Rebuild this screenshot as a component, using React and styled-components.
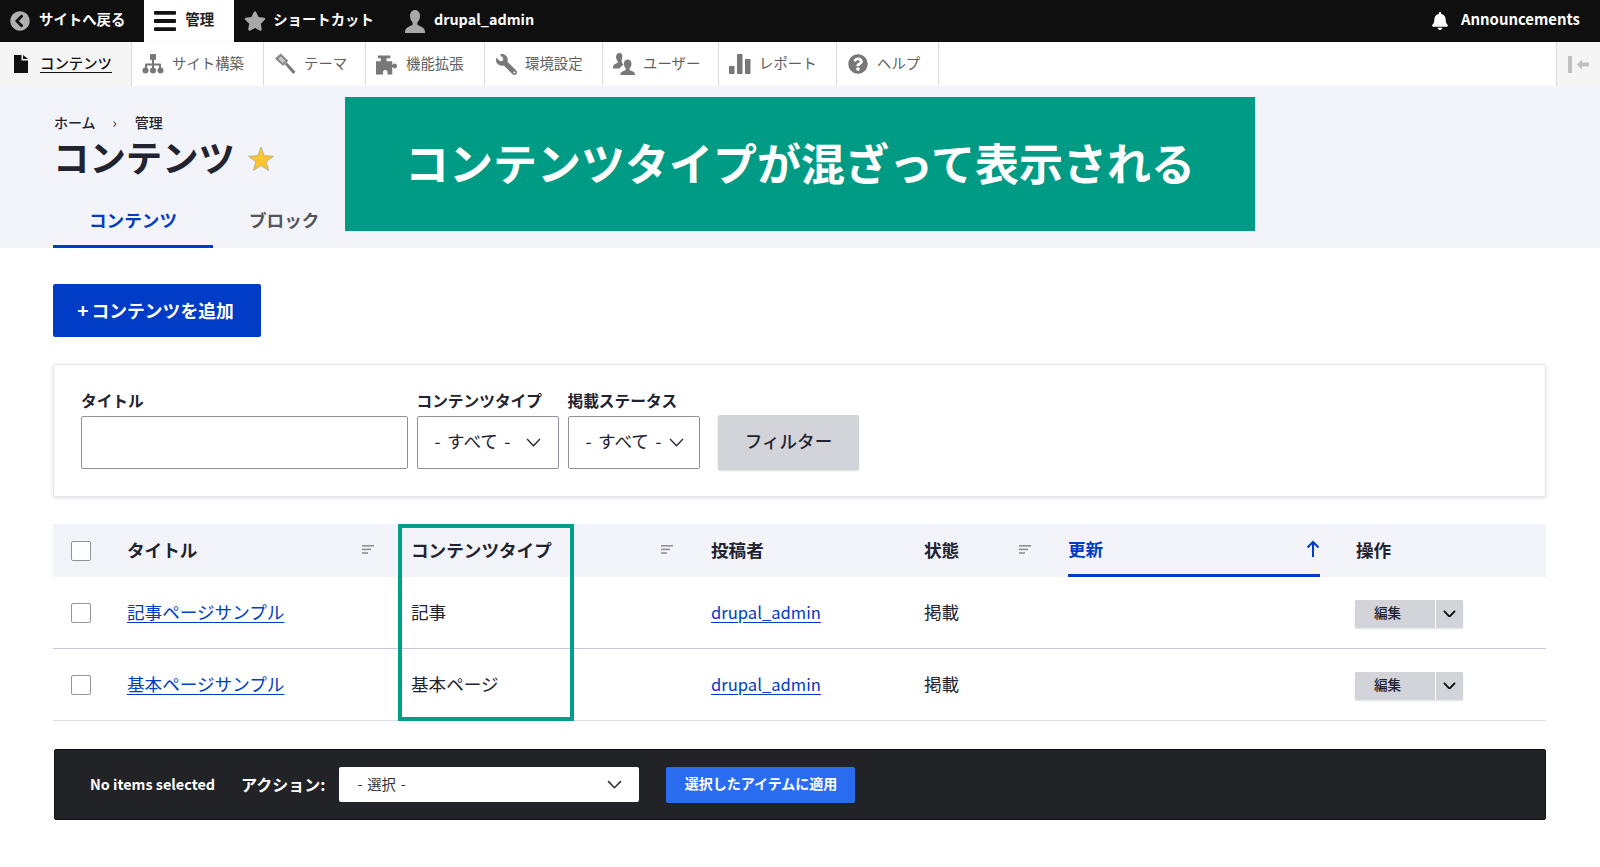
import React from 'react';
import styled, { createGlobalStyle } from 'styled-components';
import { FaChevronCircleLeft, FaStar, FaBell, FaWrench, FaQuestionCircle } from 'react-icons/fa';

const GlobalStyle = createGlobalStyle`
  html, body { margin: 0; padding: 0; background: #fff; }
  body {
    font-family: "Noto Sans CJK JP", "Noto Sans", sans-serif;
    color: #222330;
  }
  * { box-sizing: border-box; }
`;

const Page = styled.div`
  width: 1600px;
  height: 867px;
  overflow: hidden;
  background: #fff;
`;

const TopBar = styled.div`
  display: flex;
  align-items: stretch;
  height: 42px;
  background: #0f0f0f;
`;

const TopItem = styled.a`
  display: flex;
  align-items: center;
  gap: ${(p) => p.$gap || 9}px;
  padding: 0 ${(p) => p.$right || 19}px 0 10px;
  margin-left: ${(p) => (p.$push ? 'auto' : '0')};
  font-size: ${(p) => p.$size || 14.4}px;
  font-weight: 700;
  line-height: 1;
  color: ${(p) => (p.$active ? '#222' : '#fff')};
  background: ${(p) => (p.$active ? '#fff' : 'transparent')};
  svg { flex: none; }
`;

const TopLabel = styled.span`
  display: block;
  margin-top: -4px;
`;

const Toolbar = styled.div`
  position: relative;
  display: flex;
  align-items: stretch;
  height: 44px;
  background: #fff;
  box-shadow: 0 1px 1px rgba(0, 0, 0, 0.4), 0 2px 4px rgba(0, 0, 0, 0.25);
`;

const ToolItem = styled.a`
  display: flex;
  align-items: center;
  gap: 8px;
  width: ${(p) => p.$w}px;
  padding-left: 10px;
  border-right: 1px solid #dcdcdc;
  font-size: 14.4px;
  line-height: 1;
  color: ${(p) => (p.$active ? '#111' : '#5f5f5f')};
  background: ${(p) => (p.$active ? '#f5f5f5' : '#fff')};
  font-weight: ${(p) => (p.$active ? 500 : 400)};
  text-decoration: ${(p) => (p.$active ? 'underline' : 'none')};
  text-underline-offset: 3px;
`;

const ToolLabel = styled.span`
  display: block;
  margin-top: -2px;
`;

const ToolIcon = styled.span`
  display: flex;
  align-items: center;
  justify-content: center;
  width: 22px;
  height: 22px;
  flex: none;
  color: #787878;
`;

const Collapse = styled.div`
  display: flex;
  align-items: center;
  justify-content: center;
  width: 44px;
  margin-left: auto;
  background: #f5f5f5;
  border-left: 1px solid #dcdcdc;
`;

const Header = styled.header`
  position: relative;
  height: 162px;
  padding: 26px 0 0 54px;
  background: #f3f4f9;
`;

const Breadcrumb = styled.div`
  display: flex;
  align-items: center;
  height: 20px;
  font-size: 14px;
  font-weight: 500;
  color: #222330;
  span:nth-child(2) { margin: 0 18px 0 17px; font-weight: 400; }
`;

const TitleRow = styled.div`
  display: flex;
  align-items: center;
  gap: 13px;
  height: 44px;
  margin-top: 3px;
`;

const Title = styled.h1`
  margin: -3px 0 0 -1px;
  font-size: 36.4px;
  font-weight: 700;
  line-height: 44px;
  color: #222330;
`;

const StarSvg = styled.svg`
  margin-top: 2px;
`;

const Tabs = styled.div`
  display: flex;
  margin: 21px 0 0 -1px;
`;

const Tab = styled.a`
  display: flex;
  align-items: center;
  height: 48px;
  padding: 0 ${(p) => (p.$active ? 36 : 35)}px 6px;
  font-size: 17.6px;
  font-weight: 700;
  color: ${(p) => (p.$active ? '#003cc5' : '#55565b')};
  border-bottom: 3px solid ${(p) => (p.$active ? '#003cc5' : 'transparent')};
  margin-right: ${(p) => (p.$active ? '1px' : '0')};
`;

const Banner = styled.div`
  position: absolute;
  left: 345px;
  top: 11px;
  width: 910px;
  height: 134px;
  display: flex;
  align-items: center;
  justify-content: center;
  padding-bottom: 4px;
  background: #009b84;
  color: #fff;
  font-size: 44px;
  font-weight: 700;
`;

const Main = styled.main`
  padding: 36px 54px 0 53px;
`;

const AddButton = styled.a`
  display: flex;
  align-items: center;
  justify-content: center;
  gap: 3px;
  width: 208px;
  height: 53px;
  padding: 0 3px 2px 0;
  background: #003cc5;
  border-radius: 2px;
  color: #fff;
  font-size: 17.8px;
  font-weight: 700;
`;

const Plus = styled.span`
  font-size: 19px;
  line-height: 1;
`;

const FilterCard = styled.form`
  display: flex;
  align-items: flex-end;
  height: 133px;
  margin-top: 27px;
  padding: 24px 0 27px 27px;
  background: #fff;
  border: 1px solid #e6e7ee;
  border-radius: 2px;
  box-shadow: 0 1px 4px rgba(0, 0, 0, 0.12);
`;

const Field = styled.div`
  display: flex;
  flex-direction: column;
  width: ${(p) => p.$w}px;
  margin-right: ${(p) => p.$mr}px;
`;

const Label = styled.label`
  height: 27px;
  font-size: 15.7px;
  font-weight: 700;
  line-height: 24px;
  white-space: nowrap;
`;

const TextInput = styled.input`
  height: 53px;
  padding: 0 16px;
  background: #fff;
  border: 1px solid #8e929c;
  border-radius: 2px;
  outline: none;
`;

const Select = styled.div`
  display: flex;
  align-items: center;
  justify-content: space-between;
  height: 53px;
  padding: 0 ${(p) => p.$right}px 0 17px;
  background: #fff;
  border: 1px solid #8e929c;
  border-radius: 2px;
  font-size: 17.6px;
  word-spacing: 2.5px;
  white-space: pre;
  color: #222330;
`;

const SelectText = styled.span`
  display: block;
  margin-top: -4px;
`;

const FilterButton = styled.button`
  width: 141px;
  height: 55px;
  margin-bottom: -1px;
  padding: 0 0 5px;
  background: #d3d4d9;
  border: none;
  border-radius: 2px;
  box-shadow: 0 1px 2px rgba(0, 0, 0, 0.15);
  font-family: inherit;
  font-size: 17.6px;
  font-weight: 500;
  color: #222330;
`;

const TableWrap = styled.div`
  position: relative;
  margin-top: 27px;
`;

const columns = '62px 284px 300px 213px 144px 288px 1fr';

const HeadRow = styled.div`
  display: grid;
  grid-template-columns: ${columns};
  height: 53px;
  background: #f3f4f9;
`;

const HeadCell = styled.div`
  display: flex;
  align-items: center;
  justify-content: space-between;
  padding: 0 ${(p) => p.$right || 25}px 3px 12px;
  font-size: 17.6px;
  font-weight: 700;
  color: #222330;
`;

const ActiveHead = styled(HeadCell)`
  margin: 0 24px 0 12px;
  padding: 0 0 1px;
  color: #003cc5;
  border-bottom: 3px solid #003cc5;
`;

const CheckCell = styled.div`
  display: flex;
  align-items: center;
  justify-content: center;
  padding: 0 8px 0 2px;
`;

const Check = styled.input.attrs({ type: 'checkbox' })`
  appearance: none;
  width: 20px;
  height: 20px;
  margin: 0;
  background: #fff;
  border: 1px solid #91949e;
  border-radius: 2px;
`;

const Row = styled.div`
  display: grid;
  grid-template-columns: ${columns};
  height: 72px;
  border-bottom: 1px solid ${(p) => (p.$last ? '#dedfe6' : '#c5c8d6')};
`;

const Cell = styled.div`
  display: flex;
  align-items: center;
  padding: 0 0 2px 12px;
  font-size: 17.6px;
  color: #222330;
`;

const ControlCell = styled(Cell)`
  padding: 2px 0 0 12px;
`;

const TableLink = styled.a`
  color: #003cc5;
  font-size: ${(p) => p.$size || 17.6}px;
  text-decoration: underline;
  text-underline-offset: 3px;
`;

const Highlight = styled.div`
  position: absolute;
  left: 345px;
  top: 0;
  width: 176px;
  height: 197px;
  border: 4px solid #00a088;
  pointer-events: none;
`;

const DropButton = styled.div`
  display: flex;
  align-items: stretch;
  width: 108px;
  height: 28px;
  margin-left: -1px;
  background: #d3d4d9;
  border-radius: 2px;
  box-shadow: 0 1px 2px rgba(0, 0, 0, 0.12);
  font-size: 13.6px;
  font-weight: 500;
`;

const DropMain = styled.span`
  display: flex;
  align-items: center;
  width: 81px;
  padding: 0 0 3px 19px;
  border-right: 1px solid #fff;
`;

const DropToggle = styled.span`
  display: flex;
  align-items: center;
  justify-content: center;
  flex: 1;
`;

const ActionBar = styled.div`
  display: flex;
  align-items: center;
  height: 71px;
  margin: 28px 0 0 1px;
  padding-left: 35px;
  background: #222327;
  border: 1px solid #101012;
  border-radius: 2px;
  color: #fff;
`;

const Selected = styled.span`
  margin: 0 26px 2px 0;
  font-size: 14.4px;
  font-weight: 700;
`;

const ActionLabel = styled.span`
  margin: 0 14px 2px 0;
  font-size: 16px;
  font-weight: 700;
`;

const ActionSelect = styled.div`
  display: flex;
  align-items: center;
  justify-content: space-between;
  width: 300px;
  height: 35px;
  margin-right: 27px;
  padding: 0 17px 0 18px;
  background: #fff;
  border-radius: 2px;
  font-size: 14.4px;
  word-spacing: 1.5px;
  color: #333;
`;

const ActionText = styled.span`
  display: block;
  margin-top: -3px;
`;

const ApplyButton = styled.button`
  width: 189px;
  height: 36px;
  padding: 0 0 3px;
  background: #2a6cf0;
  border: none;
  border-radius: 2px;
  font-family: inherit;
  font-size: 14px;
  font-weight: 700;
  color: #fff;
`;

const Chevron = ({ w = 14, color = '#222330', sw = 1.5 }) => (
  <svg width={w} height={w * 0.6} viewBox="0 0 14 8.4" fill="none">
    <path d="M1 1l6 6.2L13 1" stroke={color} strokeWidth={sw} />
  </svg>
);

const SortIcon = () => (
  <svg width="12" height="9" viewBox="0 0 12 9" fill="#8e929c">
    <rect width="12" height="1.6" />
    <rect y="3.6" width="9" height="1.6" />
    <rect y="7.2" width="6" height="1.6" />
  </svg>
);

const UpArrow = () => (
  <svg width="14" height="17" viewBox="0 0 14 17" fill="none" stroke="#003cc5" strokeWidth="2">
    <path d="M7 17V2M1.5 7.5L7 2l5.5 5.5" />
  </svg>
);

const Hamburger = () => (
  <svg width="22" height="20" viewBox="0 0 22 20" fill="#111">
    <rect width="22" height="3.8" rx="1" />
    <rect y="8.100" width="22" height="3.8" rx="1" />
    <rect y="16.200" width="22" height="3.8" rx="1" />
  </svg>
);

const personPath =
  'M11 0C8 0 6 2.4 6 6c0 2.6 1.2 5 2.6 6.4v2.4C6 16.4 1 17.2 1 22v1h20v-1c0-4.8-5-5.6-7.6-7.2v-2.4C14.8 11 16 8.6 16 6c0-3.6-2-6-5-6z';

const Person = () => (
  <svg width="22" height="23" viewBox="0 0 22 23" fill="#a8a8a8">
    <path d={personPath} />
  </svg>
);

const FileIcon = () => (
  <svg width="14" height="18" viewBox="0 0 14 18" fill="#111">
    <path d="M0 0h7.5v5.5H14V18H0z" />
    <path d="M9 0l5 4H9z" />
  </svg>
);

const SiteIcon = () => (
  <svg width="22" height="20" viewBox="0 0 22 20" fill="#787878">
    <rect x="8" y="0" width="6" height="6" rx="1" />
    <rect x="10" y="5" width="2" height="11" />
    <path d="M3 14v-3.5a1 1 0 0 1 1-1h14a1 1 0 0 1 1 1V14h-2v-2.5H5V14z" />
    <circle cx="3.5" cy="16.5" r="3" />
    <circle cx="11" cy="16.5" r="3" />
    <circle cx="18.5" cy="16.5" r="3" />
  </svg>
);

const ThemeIcon = () => (
  <svg width="23" height="22" viewBox="0 0 23 22" fill="#787878">
    <path d="M7 0l8 7.5-5.5 5.5L1 5.2z" fill="#8a8a8a" />
    <path d="M7 3.2l4.8 4.5-2.4 2.4-4.8-4.6z" fill="#fff" opacity="0.55" />
    <path d="M11.5 11.5l2-2L22.5 19l-2.4 2.4z" />
  </svg>
);

const PuzzleIcon = () => (
  <svg width="23" height="22" viewBox="0 0 23 22" fill="#787878">
    <path d="M2 2h13v3h-4v3h6v4.2c.7-1.2 1.6-1.7 2.6-1.7 1.400 0 2.400 1.200 2.400 2.500s-1 2.500-2.400 2.500c-1 0-1.900-.6-2.600-1.700V22h-5v-2.500c0-1.200-1-2.200-2.300-2.200S7.400 18.300 7.400 19.500V22H0V8h5V5H2z" />
  </svg>
);

const UsersIcon = () => (
  <svg width="24" height="24" viewBox="0 0 24 24" fill="#787878">
    <path d="M7 0C4.800 0 3.300 1.900 3.300 4.400c0 1.800.8 3.500 1.800 4.500v1.700C3.200 11.700 0 12.400 0 15.500V17h7.500c.4-2 2-3 3.500-3.700v-1c-.9-1-1.600-2.500-1.800-4 .5-.9.800-2 .800-3.900C10.800 1.900 9.200 0 7 0z" />
    <path d="M16 7c-2.500 0-4.200 2-4.200 4.800 0 2 .9 3.800 2 4.900v1.900C11.700 19.800 8 20.500 8 23.300V24h16v-.7c0-2.800-3.700-3.500-5.800-4.700v-1.900c1.100-1.100 2-2.900 2-4.900C20.200 9 18.500 7 16 7z" />
  </svg>
);

const BarsIcon = () => (
  <svg width="22" height="20" viewBox="0 0 22 20" fill="#787878">
    <rect x="0" y="12" width="5.500" height="8" />
    <rect x="8" y="0" width="5.500" height="20" />
    <rect x="16" y="5" width="5.500" height="15" />
  </svg>
);

const CollapseIcon = () => (
  <svg width="21" height="17" viewBox="0 0 21 17" fill="#bfbfbf">
    <rect width="4" height="17" />
    <path d="M9 8.500L14 3.500V6.500H21V10.500H14V13.500z" />
  </svg>
);

const FavStar = () => (
  <StarSvg width="26" height="25" viewBox="0 0 26 25">
    <path d="M13 1l3.200 8.700 9.300.6-7.300 5.500 2.500 8.700L13 19.600l-7.700 4.900 2.500-8.700L.5 10.300l9.300-.6z" fill="#fcc42d" stroke="#a8a28a" strokeWidth="0.7" />
  </StarSvg>
);

const rows = [
  { title: '記事ページサンプル', type: '記事' },
  { title: '基本ページサンプル', type: '基本ページ' },
];

export default function App() {
  return (
    <Page>
      <GlobalStyle />
      <TopBar>
        <TopItem $gap={9} $right={19}><FaChevronCircleLeft size={20} color="#b0b0b0" /><TopLabel>サイトへ戻る</TopLabel></TopItem>
        <TopItem $active $right={20}><Hamburger /><TopLabel>管理</TopLabel></TopItem>
        <TopItem $gap={7} $right={20}><FaStar size={22} color="#a8a8a8" /><TopLabel>ショートカット</TopLabel></TopItem>
        <TopItem $gap={8} $right={10}><Person /><TopLabel>drupal_admin</TopLabel></TopItem>
        <TopItem $push $gap={12} $right={20} $size={14.9}><FaBell size={18} color="#fff" /><TopLabel>Announcements</TopLabel></TopItem>
      </TopBar>
      <Toolbar>
        <ToolItem $active $w={132}><ToolIcon><FileIcon /></ToolIcon><ToolLabel>コンテンツ</ToolLabel></ToolItem>
        <ToolItem $w={132}><ToolIcon><SiteIcon /></ToolIcon><ToolLabel>サイト構築</ToolLabel></ToolItem>
        <ToolItem $w={102}><ToolIcon><ThemeIcon /></ToolIcon><ToolLabel>テーマ</ToolLabel></ToolItem>
        <ToolItem $w={119}><ToolIcon><PuzzleIcon /></ToolIcon><ToolLabel>機能拡張</ToolLabel></ToolItem>
        <ToolItem $w={118}><ToolIcon><FaWrench size={21} style={{ transform: 'scaleX(-1)' }} /></ToolIcon><ToolLabel>環境設定</ToolLabel></ToolItem>
        <ToolItem $w={116}><ToolIcon><UsersIcon /></ToolIcon><ToolLabel>ユーザー</ToolLabel></ToolItem>
        <ToolItem $w={118}><ToolIcon><BarsIcon /></ToolIcon><ToolLabel>レポート</ToolLabel></ToolItem>
        <ToolItem $w={102}><ToolIcon><FaQuestionCircle size={20} /></ToolIcon><ToolLabel>ヘルプ</ToolLabel></ToolItem>
        <Collapse><CollapseIcon /></Collapse>
      </Toolbar>
      <Header>
        <Breadcrumb><span>ホーム</span><span>›</span><span>管理</span></Breadcrumb>
        <TitleRow>
          <Title>コンテンツ</Title>
          <FavStar />
        </TitleRow>
        <Tabs>
          <Tab $active>コンテンツ</Tab>
          <Tab>ブロック</Tab>
        </Tabs>
        <Banner>コンテンツタイプが混ざって表示される</Banner>
      </Header>
      <Main>
        <AddButton><Plus>+</Plus>コンテンツを追加</AddButton>
        <FilterCard>
          <Field $w={327} $mr={8.5}>
            <Label>タイトル</Label>
            <TextInput />
          </Field>
          <Field $w={142.5} $mr={8.5}>
            <Label>コンテンツタイプ</Label>
            <Select $right={17}><SelectText>- すべて -</SelectText><Chevron w={15} sw={1.2} /></Select>
          </Field>
          <Field $w={132} $mr={18.5}>
            <Label>掲載ステータス</Label>
            <Select $right={15}><SelectText>- すべて -</SelectText><Chevron w={15} sw={1.2} /></Select>
          </Field>
          <FilterButton type="button">フィルター</FilterButton>
        </FilterCard>
        <TableWrap>
          <HeadRow>
            <CheckCell><Check /></CheckCell>
            <HeadCell>タイトル<SortIcon /></HeadCell>
            <HeadCell $right={26}>コンテンツタイプ<SortIcon /></HeadCell>
            <HeadCell>投稿者</HeadCell>
            <HeadCell>状態<SortIcon /></HeadCell>
            <ActiveHead>更新<UpArrow /></ActiveHead>
            <HeadCell>操作</HeadCell>
          </HeadRow>
          {rows.map((row, i) => (
            <Row key={row.title} $last={i === rows.length - 1}>
              <CheckCell><Check /></CheckCell>
              <Cell><TableLink>{row.title}</TableLink></Cell>
              <Cell>{row.type}</Cell>
              <Cell><TableLink $size={16.6}>drupal_admin</TableLink></Cell>
              <Cell>掲載</Cell>
              <Cell />
              <ControlCell>
                <DropButton>
                  <DropMain>編集</DropMain>
                  <DropToggle><Chevron w={13} color="#111" sw={2} /></DropToggle>
                </DropButton>
              </ControlCell>
            </Row>
          ))}
          <Highlight />
        </TableWrap>
        <ActionBar>
          <Selected>No items selected</Selected>
          <ActionLabel>アクション:</ActionLabel>
          <ActionSelect><ActionText>- 選択 -</ActionText><Chevron w={15} color="#333" /></ActionSelect>
          <ApplyButton type="button">選択したアイテムに適用</ApplyButton>
        </ActionBar>
      </Main>
    </Page>
  );
}
